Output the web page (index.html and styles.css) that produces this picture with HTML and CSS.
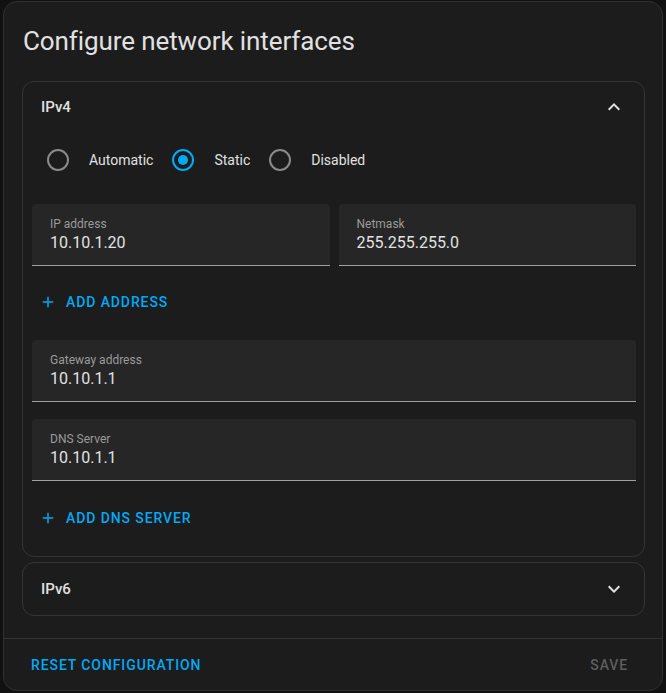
FILE: index.html
```html
<!DOCTYPE html>
<html lang="en">
<head>
    <meta charset="UTF-8">
    <meta name="viewport" content="width=device-width, initial-scale=1.0">
    <title>Configure network interfaces</title>
    <link rel="stylesheet" href="styles.css">
</head>
<body>
    <div class="dialog">
        <h2 class="dialog-title">Configure network interfaces</h2>

        <div class="dialog-content">
            <div class="panel expanded">
                <div class="panel-header">
                    <span>IPv4</span>
                    <svg class="chevron" viewBox="0 0 24 24"><path d="M7.41,15.41L12,10.83L16.59,15.41L18,14L12,8L6,14L7.41,15.41Z"/></svg>
                </div>
                <div class="panel-body">
                    <div class="radios">
                        <label class="radio"><span class="circle"></span><span class="radio-label">Automatic</span></label>
                        <label class="radio checked"><span class="circle"></span><span class="radio-label">Static</span></label>
                        <label class="radio"><span class="circle"></span><span class="radio-label">Disabled</span></label>
                    </div>

                    <div class="field-row">
                        <div class="field">
                            <span class="field-label">IP address</span>
                            <span class="field-value">10.10.1.20</span>
                        </div>
                        <div class="field">
                            <span class="field-label">Netmask</span>
                            <span class="field-value">255.255.255.0</span>
                        </div>
                    </div>

                    <button class="text-button add">
                        <svg viewBox="0 0 24 24"><path d="M19,13H13V19H11V13H5V11H11V5H13V11H19V13Z"/></svg>
                        Add address
                    </button>

                    <div class="field gateway">
                        <span class="field-label">Gateway address</span>
                        <span class="field-value">10.10.1.1</span>
                    </div>

                    <div class="field dns">
                        <span class="field-label">DNS Server</span>
                        <span class="field-value">10.10.1.1</span>
                    </div>

                    <button class="text-button add last">
                        <svg viewBox="0 0 24 24"><path d="M19,13H13V19H11V13H5V11H11V5H13V11H19V13Z"/></svg>
                        Add DNS server
                    </button>
                </div>
            </div>

            <div class="panel">
                <div class="panel-header">
                    <span>IPv6</span>
                    <svg class="chevron" viewBox="0 0 24 24"><path d="M7.41,8.58L12,13.17L16.59,8.58L18,10L12,16L6,10L7.41,8.58Z"/></svg>
                </div>
            </div>
        </div>

        <div class="dialog-actions">
            <button class="text-button">Reset configuration</button>
            <button class="text-button disabled">Save</button>
        </div>
    </div>
</body>
</html>
```

FILE: styles.css
```css
body {
    margin: 0;
    height: 693px;
    overflow: hidden;
    background-color: #111111;
    font-family: Roboto, "Noto Sans", sans-serif;
    color: #e1e1e1;
}

.dialog {
    margin: 1px 3px 0 3px;
    height: 688px;
    background-color: #1c1c1c;
    border: 1px solid #303030;
    border-radius: 14px;
    display: flex;
    flex-direction: column;
}

.dialog-title {
    margin: 0;
    padding: 23px 19px 0 19px;
    font-size: 26px;
    font-weight: 400;
    line-height: 32px;
    letter-spacing: -0.1px;
    color: #e1e1e1;
}

.dialog-content {
    padding: 24px 17px 0 18px;
    display: flex;
    flex-direction: column;
    gap: 5px;
}

.panel {
    border: 1px solid #353535;
    border-radius: 12px;
}

.panel-header {
    height: 52px;
    padding: 0 18px;
    display: flex;
    align-items: center;
    justify-content: space-between;
    font-size: 15px;
    font-weight: 500;
}

.panel.expanded .panel-header {
    height: 50px;
}

.chevron {
    width: 24px;
    height: 24px;
    fill: #e1e1e1;
}

.panel-body {
    padding: 8px 8px 20px 9px;
    display: flex;
    flex-direction: column;
}

.radios {
    display: flex;
    align-items: center;
    margin-left: 15px;
}

.radio {
    display: flex;
    align-items: center;
    height: 40px;
}

.radio .circle {
    width: 18px;
    height: 18px;
    margin-right: 20px;
    border: 2px solid #8a8a8a;
    border-radius: 50%;
    position: relative;
}

.radio.checked .circle {
    border-color: #03a9f4;
}

.radio.checked .circle::after {
    content: '';
    position: absolute;
    top: 4px;
    left: 4px;
    width: 10px;
    height: 10px;
    border-radius: 50%;
    background-color: #03a9f4;
}

.radio-label {
    font-size: 14px;
    margin-right: 19px;
}

.field-row {
    display: flex;
    gap: 9px;
    margin-top: 24px;
}

.field {
    height: 61px;
    background-color: #262626;
    border-bottom: 1px solid #a0a0a0;
    border-radius: 4px 4px 0 0;
    padding: 0 18px;
    display: flex;
    flex-direction: column;
}

.field-row .field {
    flex: 1;
}

.field-label {
    margin-top: 12px;
    font-size: 12px;
    line-height: 16px;
    color: #9a9a9a;
}

.field-value {
    font-size: 16px;
    line-height: 22px;
    color: #e1e1e1;
}

.field.gateway {
    margin-top: 20px;
}

.field.dns {
    margin-top: 17px;
}

.text-button {
    background: none;
    border: none;
    font-family: inherit;
    font-size: 14px;
    font-weight: 500;
    letter-spacing: 0.9px;
    text-transform: uppercase;
    color: #03a9f4;
    height: 36px;
    padding: 0 8px;
    display: flex;
    align-items: center;
    cursor: pointer;
}

.text-button svg {
    width: 18px;
    height: 18px;
    fill: #03a9f4;
    margin-right: 9px;
}

.text-button.add {
    align-self: flex-start;
    margin-top: 18px;
    padding-left: 7px;
}

.text-button.add.last {
    margin-top: 19px;
}

.text-button.disabled {
    color: #5e5e5e;
    cursor: default;
}

.dialog-actions {
    margin-top: auto;
    height: 51px;
    border-top: 1px solid #333333;
    padding: 0 26px 0 19px;
    display: flex;
    align-items: center;
    justify-content: space-between;
}
```
